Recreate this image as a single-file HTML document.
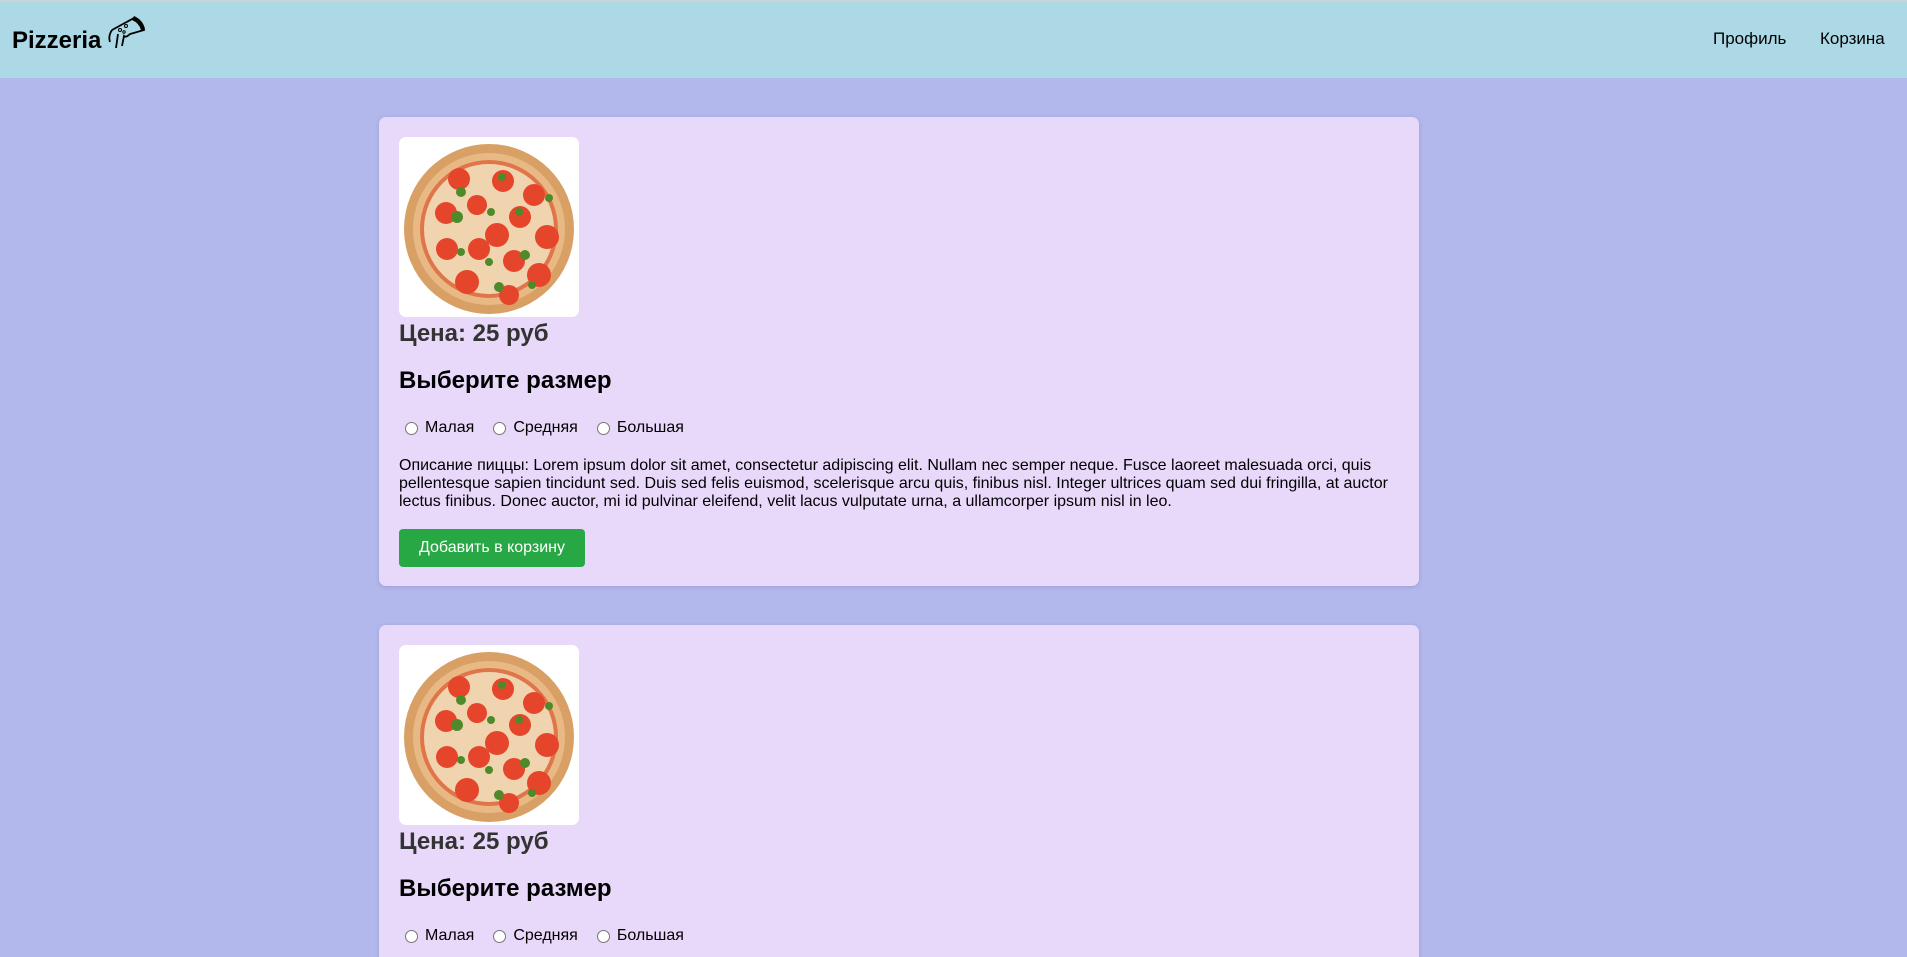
<!DOCTYPE html>
<html style="height:957px;overflow:hidden"><head><meta charset="utf-8">
<style>
*{box-sizing:border-box}
html,body{margin:0;width:1907px;height:957px;overflow:hidden}
body{background:#b3b8ec;font-family:"Liberation Sans",Arial,sans-serif;position:relative}
.wrap{position:relative;width:1907px;height:957px;overflow:hidden}
.hdr{position:absolute;left:0;top:0;width:1907px;height:78px;background:#add8e6;border-top:2px solid #c9d4d8}
.logo{position:absolute;left:12px;top:25px;font-weight:bold;font-size:24px;color:#000}
.ic{position:absolute;left:104px;top:10px}
.nav{position:absolute;top:29px;font-size:17px;color:#000}
.card{position:absolute;left:379px;width:1040px;background:#e8d8fa;border-radius:7px;padding:20px 20px 19px;box-shadow:0 1px 4px rgba(80,80,140,.25)}
.img{width:180px;height:180px;background:#fff;border-radius:7px;overflow:hidden}
.price{margin-top:3px;font-size:24px;line-height:28px;font-weight:bold;color:#333}
.h2{margin-top:19px;font-size:24px;line-height:28px;font-weight:bold;color:#000}
.rad{margin-top:23px;height:20px;font-size:16px;line-height:20px;display:flex;align-items:center}
.rad span.c{width:13px;height:13px;border:1px solid #767676;border-radius:50%;background:#fff;margin:0 7px 0 6px}
.rad span.l{margin-right:13px}
.desc{margin-top:19px;font-size:16px;line-height:18px;color:#000}
.btn{margin-top:18px;width:186px;height:38px;background:#28a745;color:#fff;border-radius:4px;font-size:16px;line-height:38px;text-align:center}
</style></head><body><div class="wrap">
<div class="hdr">
<div class="logo">Pizzeria</div>
<svg class="ic" width="42" height="40" viewBox="0 0 42 40"><path d="M8 18 L30 6 Q38 10 40 18 L26 22 Q22 26 20 24 L18 34 M14 22 L12 36 M8 18 Q4 24 6 30" fill="none" stroke="#000" stroke-width="1.8"/><path d="M30 4 Q39 8 41 17 L37 18 Q35 11 28 8 Z" fill="#000"/><circle cx="16" cy="18" r="1.5" fill="none" stroke="#000"/><circle cx="22" cy="14" r="1.5" fill="none" stroke="#000"/><circle cx="20" cy="20" r="1.2" fill="none" stroke="#000"/></svg>
</div>
<div class="nav" style="left:1713px">Профиль</div>
<div class="nav" style="left:1820px">Корзина</div>

<svg width="0" height="0" style="position:absolute"><defs><g id="pz">
<circle cx="90" cy="92" r="85" fill="#d9a066"/><circle cx="90" cy="92" r="76" fill="#e9b985"/><circle cx="90" cy="92" r="69" fill="#e0754a"/><circle cx="90" cy="92" r="65" fill="#f0d4b0"/>
<g fill="#e5452a"><circle cx="60" cy="42" r="11"/><circle cx="104" cy="44" r="11"/><circle cx="135" cy="58" r="11"/><circle cx="47" cy="76" r="11"/><circle cx="78" cy="68" r="10"/><circle cx="121" cy="80" r="11"/><circle cx="98" cy="98" r="12"/><circle cx="148" cy="100" r="12"/><circle cx="48" cy="112" r="11"/><circle cx="80" cy="112" r="11"/><circle cx="115" cy="124" r="11"/><circle cx="68" cy="145" r="12"/><circle cx="140" cy="138" r="12"/><circle cx="110" cy="158" r="10"/></g>
<g fill="#4f8a2a"><circle cx="103" cy="40" r="4"/><circle cx="62" cy="55" r="5"/><circle cx="150" cy="61" r="4"/><circle cx="58" cy="80" r="6"/><circle cx="120" cy="75" r="4"/><circle cx="92" cy="75" r="4"/><circle cx="126" cy="118" r="5"/><circle cx="90" cy="125" r="4"/><circle cx="100" cy="150" r="5"/><circle cx="62" cy="115" r="4"/><circle cx="133" cy="148" r="4"/></g>
</g></defs></svg>

<div class="card" style="top:117px">
<div class="img"><svg width="180" height="180"><use href="#pz"/></svg></div>
<div class="price">Цена: 25 руб</div>
<div class="h2">Выберите размер</div>
<div class="rad"><span class="c"></span><span class="l">Малая</span><span class="c"></span><span class="l">Средняя</span><span class="c"></span><span class="l">Большая</span></div>
<div class="desc">Описание пиццы: Lorem ipsum dolor sit amet, consectetur adipiscing elit. Nullam nec semper neque. Fusce laoreet malesuada orci, quis pellentesque sapien tincidunt sed. Duis sed felis euismod, scelerisque arcu quis, finibus nisl. Integer ultrices quam sed dui fringilla, at auctor lectus finibus. Donec auctor, mi id pulvinar eleifend, velit lacus vulputate urna, a ullamcorper ipsum nisl in leo.</div>
<div class="btn">Добавить в корзину</div>
</div>

<div class="card" style="top:625px">
<div class="img"><svg width="180" height="180"><use href="#pz"/></svg></div>
<div class="price">Цена: 25 руб</div>
<div class="h2">Выберите размер</div>
<div class="rad"><span class="c"></span><span class="l">Малая</span><span class="c"></span><span class="l">Средняя</span><span class="c"></span><span class="l">Большая</span></div>
<div class="desc">Описание пиццы: Lorem ipsum dolor sit amet, consectetur adipiscing elit. Nullam nec semper neque. Fusce laoreet malesuada orci, quis pellentesque sapien tincidunt sed. Duis sed felis euismod, scelerisque arcu quis, finibus nisl. Integer ultrices quam sed dui fringilla, at auctor lectus finibus. Donec auctor, mi id pulvinar eleifend, velit lacus vulputate urna, a ullamcorper ipsum nisl in leo.</div>
<div class="btn">Добавить в корзину</div>
</div>
</div></body></html>
